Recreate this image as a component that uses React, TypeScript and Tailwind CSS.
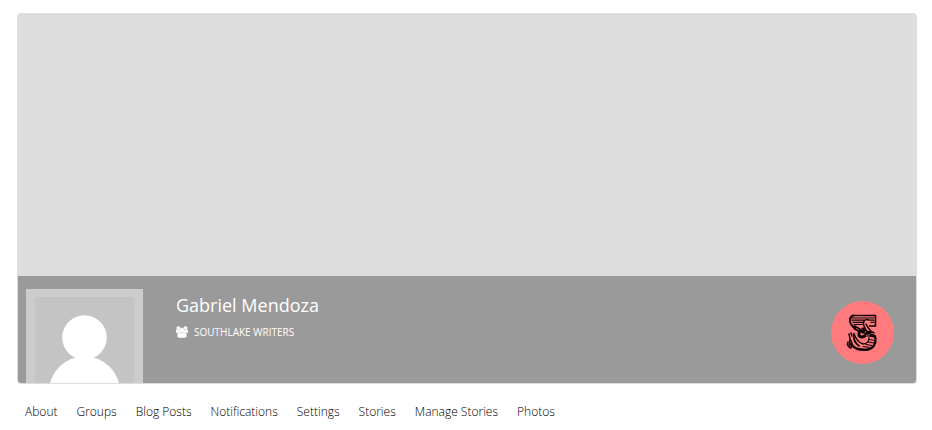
const tabs = ['About', 'Groups', 'Blog Posts', 'Notifications', 'Settings', 'Stories', 'Manage Stories', 'Photos']

function UsersIcon() {
    return (
        <svg viewBox="0 0 1920 1792" className="w-3 h-3 flex-shrink-0" fill="currentColor" stroke="currentColor" strokeWidth="90" aria-hidden="true">
            <path d="M593 896q-162 5-265 128h-134q-82 0-138-40.5t-56-118.5q0-353 124-353 6 0 43.5 21t97.5 42.5 119 21.5q67 0 133-23-5 37-5 66 0 139 81 256zm1071 637q0 120-73 189.5t-194 69.5h-874q-121 0-194-69.5t-73-189.5q0-53 3.5-103.5t14-109 26.5-108.5 43-97.5 62-81 85.5-53.5 111.5-20q10 0 43 21.5t73 48 107 48 135 21.5 135-21.5 107-48 73-48 43-21.5q61 0 111.5 20t85.5 53.5 62 81 43 97.5 26.5 108.5 14 109 3.5 103.5zm-1024-1277q0 106-75 181t-181 75-181-75-75-181 75-181 181-75 181 75 75 181zm704 384q0 159-112.5 271.5t-271.5 112.5-271.5-112.5-112.5-271.5 112.5-271.5 271.5-112.5 271.5 112.5 112.5 271.5zm576 225q0 78-56 118.5t-138 40.5h-134q-103-123-265-128 81-117 81-256 0-29-5-66 66 23 133 23 59 0 119-21.5t97.5-42.5 43.5-21q124 0 124 353zm-128-609q0 106-75 181t-181 75-181-75-75-181 75-181 181-75 181 75 75 181z" />
        </svg>
    )
}

function Avatar() {
    return (
        <svg viewBox="0 0 100 100" className="w-full" role="img" aria-label="Gabriel Mendoza">
            <rect width="100" height="100" fill="#c4c4c4" />
            <circle cx="50" cy="41" r="22.5" fill="#fff" />
            <ellipse cx="50" cy="96" rx="36" ry="36" fill="#fff" />
        </svg>
    )
}

// Ornamental engraved emblem in a round badge
function GroupBadge() {
    return (
        <svg viewBox="0 0 63 63" className="w-full" aria-hidden="true">
            <circle cx="31.5" cy="31.5" r="31.5" fill="#ff7b7e" />
            <g fill="none" stroke="#120405" strokeLinecap="round" strokeLinejoin="round">
                {/* upper banner */}
                <path d="M22 14.500h22.500V25h-6" strokeWidth="1.600" />
                <path d="M22 14.500c-4 2-4 7-1 10 2 3 5 5 8 6" strokeWidth="2" />
                <path d="M21 17h22M21 19.200h12M39 19.200h4M22 21.400h10M40 21.400h3M23 23.500h8" strokeWidth="1.200" />
                <path d="M24 25.500c3 2 6 3 8 6" strokeWidth="2.400" />
                <path d="M38 19c-4-2-7 2-5 6l3 6M35 23c1 3 3 5 5 7" strokeWidth="1.400" />
                {/* centre knot */}
                <path d="M29 31c-2 2-1 5 2 5s4-3 6-3M32 28l3 4M35 31l7 1M37 34l6 1" strokeWidth="3.200" />
                {/* lower scroll */}
                <path d="M44 35c2 8-2 14-11 14-6 0-10-2-13-6" strokeWidth="2.200" />
                <path d="M23 33c2 5 5 9 9 10 4 0 6-3 6-6" strokeWidth="1.400" />
                <path d="M23 33c-1 5 1 9 5 12" strokeWidth="1.800" />
                <path d="M18 33l1 5-1 8 2 1 1-5-2-4M20 32l1 3M18 45c-2 0-2-2-1-4" strokeWidth="1.500" />
                <path d="M38 38.500l6 1M37 41l6 1M35 43.500l6 1M32 45.500l7 1M29 47.500l7 1" strokeWidth="1.100" />
            </g>
            <g stroke="#ff7b7e" strokeWidth="0.700" fill="none">
                <path d="M29 32.500l2 1M34 30l1 2M35 34.500l4-1M40 32.500h3M25 27l3 2" />
            </g>
        </svg>
    )
}

export default function App() {
    return (
        <main className="pl-[17px] pr-[15px] pt-[13px] font-['Open_Sans',sans-serif]">
            <header className="rounded border border-[#dddddd] bg-[#dddddd] overflow-hidden">
                <div className="h-[262px]" />

                <div className="flex h-[107px] items-start bg-[#9a9a9a] pl-2 pr-[22px] text-white">
                    <a href="#avatar" className="mt-[13px] w-[117px] flex-shrink-0 border-8 border-r-9 border-l-9 border-[#cccccc]">
                        <Avatar />
                    </a>

                    <div className="ml-[33px] flex-1 pt-[15px]">
                        <h1 className="text-lg leading-7">Gabriel Mendoza</h1>
                        <a href="#group" className="mt-[5px] flex items-center gap-1.5 text-[10px] leading-4 uppercase">
                            <UsersIcon />
                            Southlake Writers
                        </a>
                    </div>

                    <a href="#badge" aria-label="Southlake Writers" className="mt-[25px] w-[63px] flex-shrink-0">
                        <GroupBadge />
                    </a>
                </div>
            </header>

            <nav className="mt-[18px] ml-2 flex flex-wrap gap-[19px] text-xs leading-5 font-light text-black">
                {tabs.map((tab) => (
                    <a key={tab} href="#tab">
                        {tab}
                    </a>
                ))}
            </nav>
        </main>
    )
}
